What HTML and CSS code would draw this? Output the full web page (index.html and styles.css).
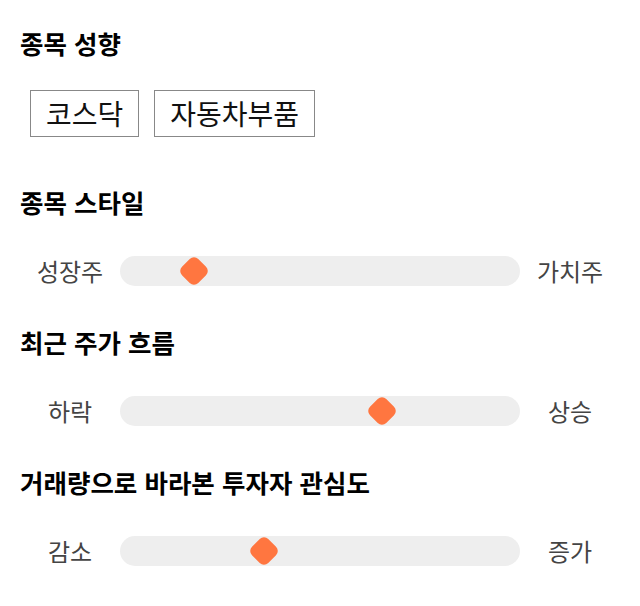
FILE: index.html
```html
<!DOCTYPE html>
<html lang="ko">
<head>
    <meta charset="UTF-8">
    <meta name="viewport" content="width=device-width, initial-scale=1.0">
    <title>종목 분석</title>
    <link rel="stylesheet" href="styles.css">
</head>
<body>
    <div class="group">
        <h2>종목 성향</h2>
        <div class="tags">
            <span class="tag">코스닥</span>
            <span class="tag">자동차부품</span>
        </div>
    </div>

    <div class="group">
        <h2>종목 스타일</h2>
        <div class="scale">
            <span class="scale-label">성장주</span>
            <div class="track"><span class="thumb" style="left: 18.5%"></span></div>
            <span class="scale-label">가치주</span>
        </div>
    </div>

    <div class="group">
        <h2>최근 주가 흐름</h2>
        <div class="scale">
            <span class="scale-label">하락</span>
            <div class="track"><span class="thumb" style="left: 65.5%"></span></div>
            <span class="scale-label">상승</span>
        </div>
    </div>

    <div class="group">
        <h2>거래량으로 바라본 투자자 관심도</h2>
        <div class="scale">
            <span class="scale-label">감소</span>
            <div class="track"><span class="thumb" style="left: 36%"></span></div>
            <span class="scale-label">증가</span>
        </div>
    </div>
</body>
</html>
```

FILE: styles.css
```css
body {
    margin: 0;
    padding: 28px 20px 0;
    font-family: "Noto Sans CJK KR", "Noto Sans", sans-serif;
    color: #000;
    background: #fff;
}

.group {
    margin-bottom: 41px;
}

h2 {
    margin: 0 0 39px;
    font-size: 25.5px;
    line-height: 30px;
    font-weight: 700;
}

.tags {
    display: flex;
    gap: 15px;
    padding-left: 10px;
    padding-bottom: 9px;
    margin-top: -7px;
}

.tag {
    border: 1px solid #888;
    padding: 10px 15px;
    font-size: 28px;
    line-height: 25px;
    color: #111;
}

.scale {
    display: flex;
    align-items: center;
}

.scale-label {
    width: 100px;
    text-align: center;
    font-size: 24px;
    line-height: 30px;
    color: #444;
}

.track {
    flex: 1;
    position: relative;
    height: 30px;
    border-radius: 15px;
    background-color: #eeeeee;
}

.thumb {
    position: absolute;
    top: 50%;
    width: 23px;
    height: 23px;
    background-color: #ff7640;
    border-radius: 6px;
    transform: translate(-50%, -50%) rotate(45deg);
}
```
